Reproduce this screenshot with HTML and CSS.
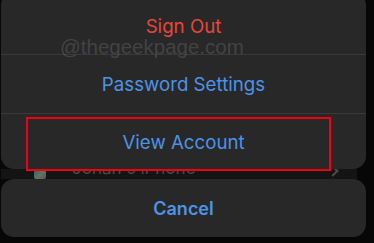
FILE: index.html
```html
<!DOCTYPE html>
<html>
<head>
<meta charset="utf-8">
<link rel="stylesheet" href="styles.css">
</head>
<body>
<div class="sheet">
  <div class="card group">
    <div class="row row-first"><span class="danger">Sign Out</span></div>
    <div class="sep"></div>
    <div class="row row-mid"><span class="action">Password Settings</span></div>
    <div class="sep"></div>
    <div class="row row-last"><span class="action">View Account</span></div>
  </div>
  <div class="strip">
    <div class="dev-icon"></div>
    <div class="dev-name">Jonah's iPhone</div>
    <div class="chev"></div>
  </div>
  <div class="card cancel"><span class="action bold">Cancel</span></div>
</div>
<div class="watermark">@thegeekpage.com</div>
<div class="highlight"></div>
</body>
</html>
```
FILE: styles.css
```css
html, body {
  margin: 0;
  padding: 0;
}
body {
  width: 374px;
  height: 243px;
  overflow: hidden;
  background: #070707;
  position: relative;
  font-family: Inter, "Liberation Sans", sans-serif;
}
.sheet {
  width: 365px;
  margin-left: 1px;
  display: flex;
  flex-direction: column;
}
.card {
  background: #282828;
  border-radius: 13px;
}
.group {
  margin-top: -8px;
  display: flex;
  flex-direction: column;
}
.row {
  display: flex;
  align-items: center;
  justify-content: center;
  font-size: 18.7px;
}
.row-first {
  height: 62px;
  padding-top: 6px;
  box-sizing: border-box;
}
.row-mid {
  height: 58px;
}
.row-last {
  height: 55px;
  padding-top: 2px;
  box-sizing: border-box;
}
.sep {
  height: 1px;
  background: #3a3a3a;
}
.danger { color: #e8453b; }
.action { color: #4d93e6; }
.bold { font-weight: 600; }
.strip {
  height: 10px;
  margin-right: 9px;
  background: #141414;
  display: flex;
  align-items: flex-end;
  overflow: hidden;
}
.dev-icon {
  width: 12px;
  height: 9px;
  margin-left: 33px;
  background: linear-gradient(135deg, #3b5a7a, #5a7a5a 50%, #6a4a6a);
  border-radius: 2px;
  flex: none;
}
.dev-name {
  margin-left: 26px;
  font-size: 17px;
  line-height: 17px;
  margin-bottom: 2px;
  color: #4a4a4a;
  flex: none;
}
.chev {
  margin-left: auto;
  margin-right: 20px;
  width: 6px;
  height: 6px;
  border-right: 2px solid #4a4a4a;
  border-top: 2px solid #4a4a4a;
  transform: rotate(45deg);
  margin-bottom: 4px;
}
.cancel {
  height: 58px;
  display: flex;
  align-items: center;
  justify-content: center;
  font-size: 18px;
}
.watermark {
  position: absolute;
  left: 60px;
  top: 35px;
  font-size: 20.5px;
  color: rgba(255, 255, 255, 0.14);
  font-family: "Liberation Sans", sans-serif;
}
.highlight {
  position: absolute;
  left: 26px;
  top: 117px;
  width: 305px;
  height: 54px;
  box-sizing: border-box;
  border: 2px solid #f00010;
}
```
